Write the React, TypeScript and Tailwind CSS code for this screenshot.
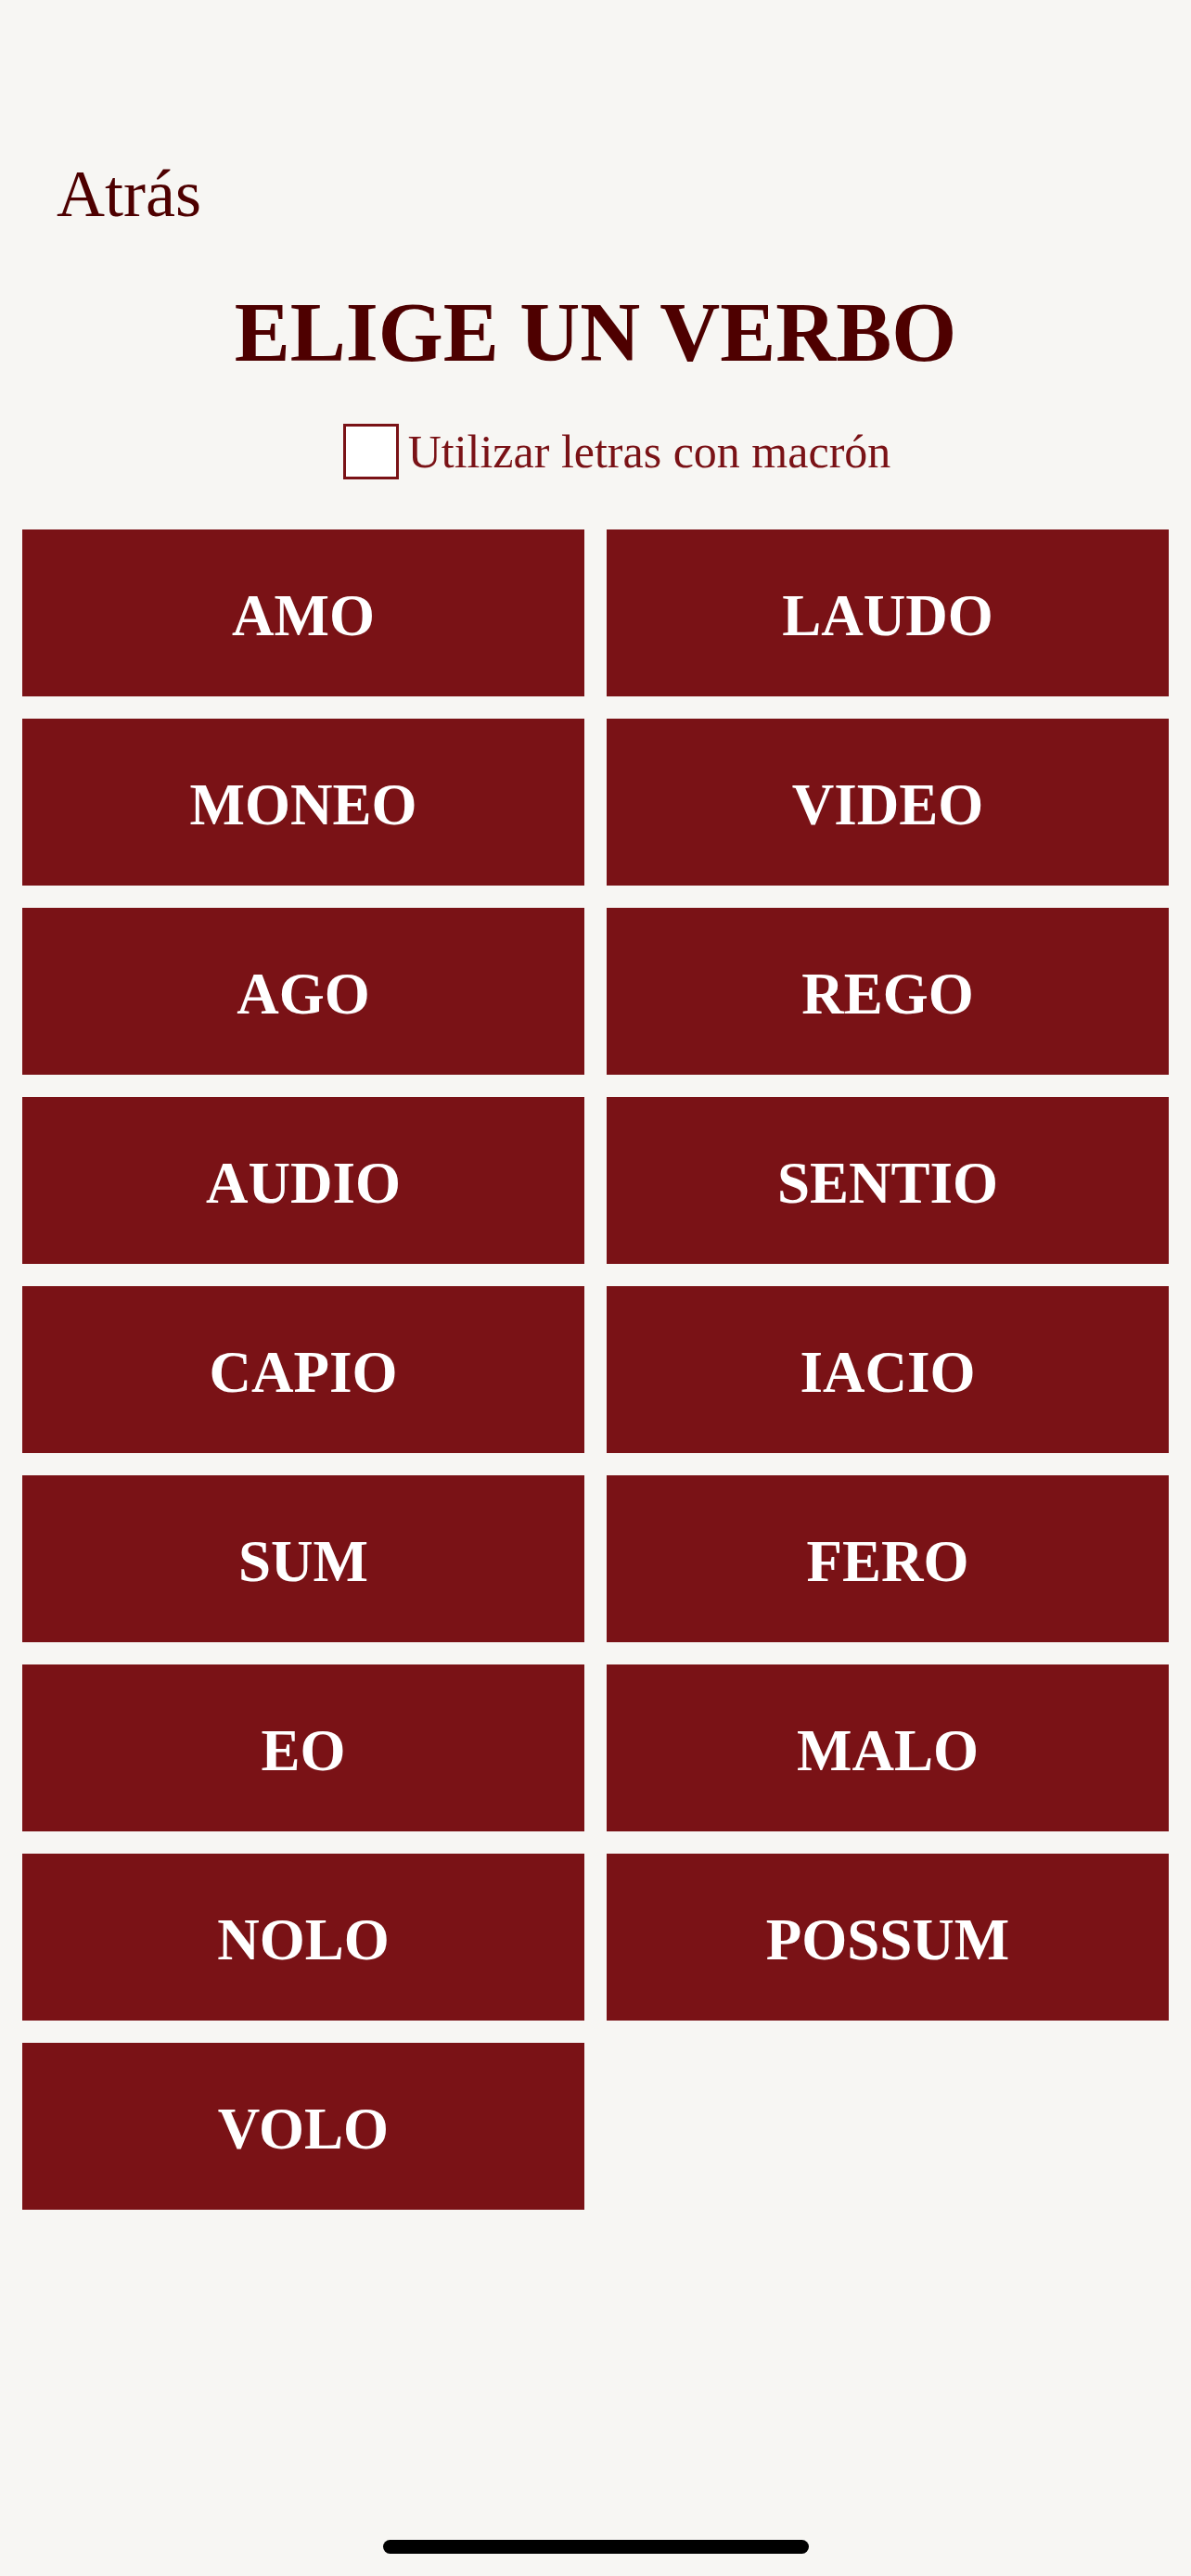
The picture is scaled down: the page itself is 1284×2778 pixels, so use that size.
import React from "react";

const verbs = [
  "AMO", "LAUDO",
  "MONEO", "VIDEO",
  "AGO", "REGO",
  "AUDIO", "SENTIO",
  "CAPIO", "IACIO",
  "SUM", "FERO",
  "EO", "MALO",
  "NOLO", "POSSUM",
  "VOLO",
];

export default function App() {
  return (
    <div
      className="relative min-h-[2778px] w-full bg-[#f7f6f3]"
      style={{ fontFamily: '"Liberation Serif", "Times New Roman", serif' }}
    >
      <div className="px-[24px] pt-[173px]">
        <div className="pl-[37px]">
          <button className="text-[72px] leading-[72px] text-[#4e0000]">Atrás</button>
        </div>
        <h1 className="mt-[69px] text-center text-[90px] font-bold leading-[90px] text-[#4e0000]">
          ELIGE UN VERBO
        </h1>
        <label className="mt-[53px] flex items-center justify-center gap-[10px] pl-[46px]">
          <span className="box-border block h-[60px] w-[60px] border-[3px] border-[#7a1216] bg-white" />
          <span className="text-[50px] leading-[60px] text-[#7a1216]">Utilizar letras con macrón</span>
        </label>
        <div className="mt-[54px] grid grid-cols-2 gap-[24px]">
          {verbs.map((v) => (
            <button
              key={v}
              className="flex h-[180px] items-center justify-center bg-[#7a1216] pt-[6px] text-[63px] font-bold leading-[64px] text-white"
            >
              {v}
            </button>
          ))}
        </div>
      </div>
      <div className="absolute bottom-[24px] left-[413px] h-[15px] w-[459px] rounded-full bg-black" />
    </div>
  );
}
